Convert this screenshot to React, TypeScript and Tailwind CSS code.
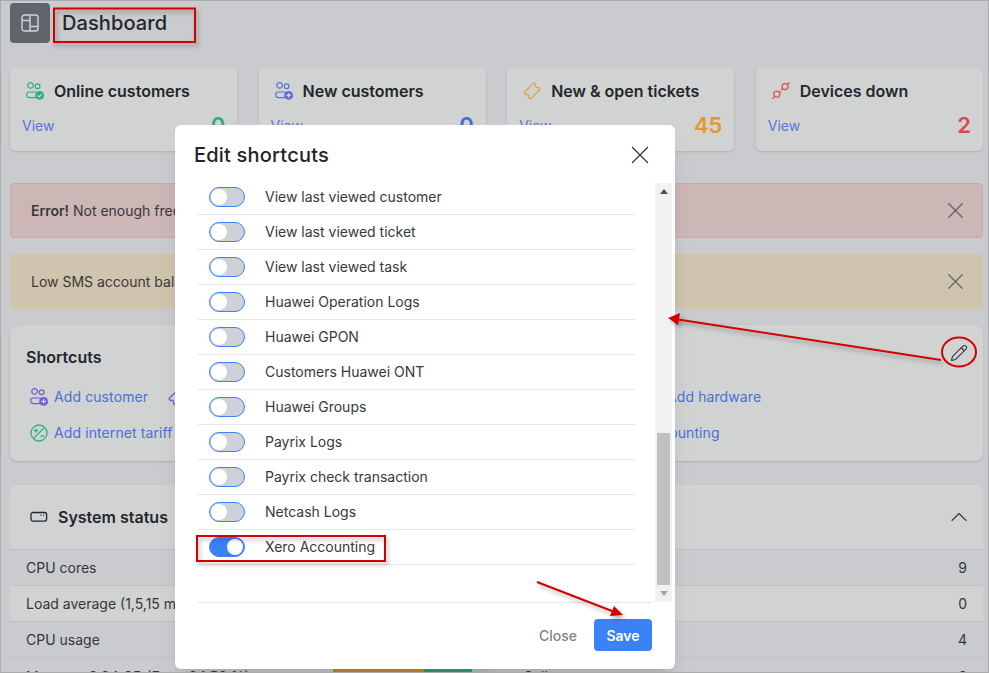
import { ChevronUp, Pencil, X } from 'lucide-react';

const font = { fontFamily: 'Inter, "Noto Sans", sans-serif' };

function UsersIcon({ color, badge }: { color: string; badge: 'check' | 'plus' }) {
  return (
    <svg width="18" height="18" viewBox="0 0 18 18" fill="none" stroke={color} strokeWidth="1.2" className="shrink-0">
      <circle cx="4.6" cy="3.4" r="2.8" />
      <circle cx="11.6" cy="4.2" r="2.4" />
      <rect x="0.6" y="10" width="11" height="5.6" rx="2.8" />
      <circle cx="13.6" cy="13.4" r="4.4" fill={color} stroke="none" />
      {badge === 'check' ? (
        <path d="M11.6 13.5l1.5 1.5 2.6-2.9" stroke="#d1d3d3" strokeWidth="1.2" />
      ) : (
        <path d="M13.6 11v4.8M11.2 13.4H16" stroke="#d1d3d3" strokeWidth="1.3" />
      )}
    </svg>
  );
}

function TicketIcon({ color }: { color: string }) {
  return (
    <svg width="18" height="18" viewBox="0 0 18 18" fill="none" stroke={color} strokeWidth="1.2" className="shrink-0">
      <path
        transform="rotate(-45 9 9)"
        d="M2 4.5H16V7.4A1.6 1.6 0 0 0 16 10.6V13.5H2V10.6A1.6 1.6 0 0 0 2 7.4Z"
        strokeLinejoin="round"
      />
    </svg>
  );
}

function PlugIcon() {
  return (
    <svg width="18" height="18" viewBox="0 0 18 18" fill="none" stroke="#d2575c" strokeWidth="1.3" className="shrink-0">
      <circle cx="4.8" cy="12.2" r="3" />
      <circle cx="13" cy="4.6" r="3" />
      <path d="M0.6 16.8l2-2.4M15.2 2.4L17.4 0.4M7.4 10.4l1.4-1M9.2 8l1.4-1.2" />
    </svg>
  );
}

function TariffIcon() {
  return (
    <svg width="18" height="18" viewBox="0 0 18 18" fill="none" stroke="#2fae85" strokeWidth="1.3" className="shrink-0">
      <circle cx="9" cy="9" r="8" />
      <path d="M14.6 3.4L3.4 14.6M4 6.6h4M6 4.6v4M10.4 12.2h4" />
    </svg>
  );
}

function ServerIcon() {
  return (
    <svg width="18" height="12" viewBox="0 0 18 12" fill="none" stroke="#23272c" strokeWidth="1.3" className="shrink-0">
      <rect x="1" y="1.5" width="15.6" height="8.6" rx="2" />
      <path d="M10.5 4.2h1M13 4.2h1" />
    </svg>
  );
}

function LayoutIcon() {
  return (
    <svg width="18" height="18" viewBox="0 0 18 18" fill="none" stroke="#cfd3d6" strokeWidth="1.4">
      <rect x="1" y="1" width="16" height="16" rx="2.5" />
      <path d="M9 1v16M1 6.5h8M9 12.5h8" />
    </svg>
  );
}

function StatCard({
  icon,
  title,
  value,
  valueClass,
}: {
  icon: React.ReactNode;
  title: string;
  value: string;
  valueClass: string;
}) {
  return (
    <div className="flex h-[84px] flex-col rounded-md bg-[#d1d3d3] pr-[12px] pl-[12px] pt-[15px] shadow-sm">
      <div className="flex items-center gap-[10px] pl-[4px]">
        {icon}
        <span className="text-[16px] leading-[18px] font-semibold text-[#23272c]">{title}</span>
      </div>
      <div className="mt-[11px] flex items-center justify-between">
        <span className="text-[14px] text-[#5a76d6]">View</span>
        <span className={`text-[22px] leading-[28px] font-semibold ${valueClass}`}>{value}</span>
      </div>
    </div>
  );
}

function Alert({ className, children }: { className: string; children: React.ReactNode }) {
  return (
    <div className={`flex h-[55px] items-center justify-between rounded-[4px] border pr-[13px] pl-[20px] text-[14px] text-[#3a3836] ${className}`}>
      <div>{children}</div>
      <X size={27} strokeWidth={1.2} className="text-[#6b6765]" />
    </div>
  );
}

const rows = [
  'View last viewed customer',
  'View last viewed ticket',
  'View last viewed task',
  'Huawei Operation Logs',
  'Huawei GPON',
  'Customers Huawei ONT',
  'Huawei Groups',
  'Payrix Logs',
  'Payrix check transaction',
  'Netcash Logs',
  'Xero Accounting',
];

function Toggle({ on }: { on: boolean }) {
  return (
    <div
      className={`flex h-[20px] w-[36px] items-center rounded-full border-[1.5px] border-[#3b82f6] px-[1px] ${
        on ? 'justify-end bg-[#3b82f6]' : 'justify-start bg-[#ced2d8]'
      }`}
    >
      <div className="h-[16px] w-[16px] rounded-full bg-white" />
    </div>
  );
}

const status = [
  ['CPU cores', '9'],
  ['Load average (1,5,15 min)', '0'],
  ['CPU usage', '4'],
];

export default function App() {
  return (
    <div style={font} className="relative h-[673px] w-[989px] overflow-hidden border border-[#a9abad] bg-[#c9cbcf] pr-[5px] pl-[9px] pt-[2px]">
      {/* page title */}
      <div className="flex h-[40px] items-center">
        <div className="flex h-[40px] w-[40px] items-center justify-center rounded-[4px] bg-[#5f656b]">
          <LayoutIcon />
        </div>
        <h1 className="ml-[12px] text-[20px] font-medium tracking-[0.1px] text-[#23272c]">Dashboard</h1>
      </div>

      <div className="mt-[24px] grid grid-cols-4 gap-[21.3px]">
        <StatCard icon={<UsersIcon color="#2fae85" badge="check" />} title="Online customers" value="0" valueClass="text-[#2fae85]" />
        <StatCard icon={<UsersIcon color="#5f6fd8" badge="plus" />} title="New customers" value="0" valueClass="text-[#3f6fd8]" />
        <StatCard icon={<TicketIcon color="#e0a03c" />} title="New & open tickets" value="45" valueClass="text-[#df9a2c]" />
        <StatCard icon={<PlugIcon />} title="Devices down" value="2" valueClass="text-[#d34c50]" />
      </div>

      <div className="mt-[32px] flex flex-col gap-[16px]">
        <Alert className="border-[#c9a9a8] bg-[#ccb7b6]">
          <b className="font-semibold">Error!</b> Not enough free disk space on the server
        </Alert>
        <Alert className="border-[#d5c49f] bg-[#cfc5ae]">Low SMS account balance, please top up your account</Alert>
      </div>

      <div className="mt-[16px] h-[136px] rounded-lg bg-[#d1d3d3] pr-[16px] pl-[16px] shadow-sm">
        <div className="flex h-[63px] items-center justify-between">
          <h2 className="text-[16px] font-semibold text-[#23272c]">Shortcuts</h2>
          <Pencil size={18} strokeWidth={1.5} className="mt-[-8px] mr-[-1px] text-[#33373b]" />
        </div>
        <div className="grid grid-cols-[138px_499px_auto] items-center gap-y-[18px] pl-[4px] text-[14px] leading-[18px] tracking-[0.1px] text-[#4b6fd8]">
          <div className="flex items-center gap-[6px]">
            <UsersIcon color="#7657d8" badge="plus" />
            Add customer
          </div>
          <div className="flex items-center gap-[6px]">
            <TicketIcon color="#7657d8" />
            Add ticket
          </div>
          <div>Add hardware</div>
          <div className="flex items-center gap-[6px] whitespace-nowrap">
            <TariffIcon />
            Add internet tariff
          </div>
          <div />
          <div className="-ml-[59px]">Xero Accounting</div>
        </div>
      </div>

      <div className="mt-[24px] rounded-t-lg bg-[#d1d3d3]">
        <div className="flex h-[65px] items-center justify-between border-b border-[#bfc1c3] pr-[10px] pl-[20px]">
          <div className="flex items-center gap-[10px]">
            <ServerIcon />
            <h2 className="text-[16px] font-semibold text-[#23272c]">System status</h2>
          </div>
          <ChevronUp size={28} strokeWidth={1} className="text-[#3a3e42]" />
        </div>
        {status.map(([label, value], i) => (
          <div
            key={label}
            className={`flex h-[36px] items-center justify-between border-b border-[#bfc1c3] px-[16px] text-[14px] text-[#33373b] ${
              i % 2 === 0 ? 'bg-[#c9cbcf]' : 'bg-[#d1d3d3]'
            }`}
          >
            <span>{label}</span>
            <span>{value}</span>
          </div>
        ))}
        <div className="flex h-[36px] items-center bg-[#c9cbcf] px-[16px] text-[14px] text-[#33373b]">
          <span className="w-[307px]">Memory: 3.94 GB (Free: 34.56 %)</span>
          <div className="flex h-[20px] w-[156px] bg-[#bfc1c3]">
            <div className="w-[91px] bg-[#c8921e]" />
            <div className="w-[48px] bg-[#2ba67e]" />
          </div>
          <span className="ml-[34px]">Calls</span>
          <span className="ml-auto">0</span>
        </div>
      </div>

      {/* edit shortcuts modal */}
      <div className="absolute top-[124px] left-[174px] flex h-[544px] w-[500px] flex-col rounded-md bg-white shadow-xl">
        <div className="flex h-[58px] shrink-0 items-center justify-between pr-[20px] pl-[19px] pt-[1px]">
          <h2 className="text-[20px] font-medium tracking-[0.2px] text-[#212529]">Edit shortcuts</h2>
          <X size={30} strokeWidth={1} className="text-[#33373b]" />
        </div>
        <div className="flex h-[419px] shrink-0 pl-[23px]">
          <div className="h-full w-[437px] overflow-hidden">
            <div className="-mt-[3px]">
              {rows.map((label, i) => (
                <div key={label} className="flex h-[35px] items-center gap-[20px] border-b border-[#e5e7eb] pl-[11px] text-[14px] text-[#343a40]">
                  <Toggle on={i === rows.length - 1} />
                  <span className="-mt-[1px]">{label}</span>
                </div>
              ))}
            </div>
          </div>
          <div className="ml-[20px] flex w-[17px] flex-col items-center justify-between bg-[#f1f1f1] px-[2px] py-[6px]">
            <div className="h-0 w-0 border-x-[4px] border-b-[5px] border-x-transparent border-b-[#505050]" />
            <div className="mt-auto mb-[6px] h-[152px] w-[13px] bg-[#c1c1c1]" />
            <div className="h-0 w-0 border-x-[4px] border-t-[5px] border-x-transparent border-t-[#a3a3a3]" />
          </div>
        </div>
        <div className="mx-[23px] flex items-center justify-end gap-[17px] border-t border-[#e5e7eb] pt-[16px]">
          <span className="text-[14px] font-medium text-[#7d858d]">Close</span>
          <button className="h-[32px] w-[58px] rounded-[4px] bg-[#3b82f6] text-[14px] font-semibold text-white">Save</button>
        </div>
      </div>

      {/* red annotations from the help article */}
      <svg className="pointer-events-none absolute top-[-1px] left-[-1px] h-[673px] w-[989px]" viewBox="0 0 989 673" fill="none">
        <defs>
          <filter id="shade" x="-10%" y="-30%" width="120%" height="180%">
            <feDropShadow dx="2" dy="3" stdDeviation="2" floodColor="#000" floodOpacity="0.3" />
          </filter>
        </defs>
        <g stroke="#d40000" strokeWidth="2" filter="url(#shade)">
          <rect x="54" y="8.5" width="141" height="33.5" />
          <rect x="197" y="536" width="188" height="25" />
          <path d="M941 360L678 319.5M537 582L612 611" />
          <path d="M668 318L680 313L678 325Z" fill="#d40000" stroke="none" />
          <path d="M623 615L610 616L614 606Z" fill="#d40000" stroke="none" />
        </g>
        <ellipse cx="959" cy="352" rx="17" ry="14.5" stroke="#d40000" strokeWidth="2" />
      </svg>
    </div>
  );
}
